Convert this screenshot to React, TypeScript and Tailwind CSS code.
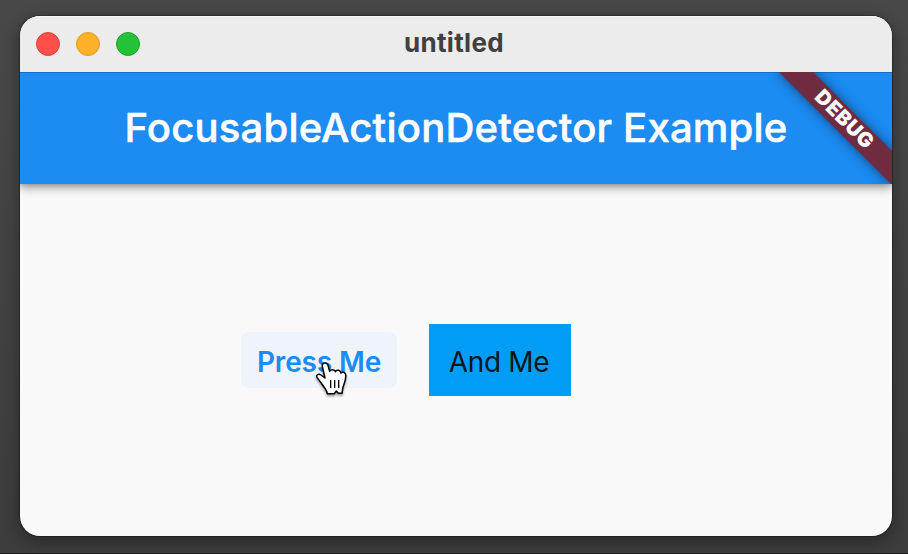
import React from "react";

function TrafficLights() {
  return (
    <div className="flex w-[120px] gap-4 pl-4">
      <span className="size-6 rounded-full border border-[#d9453f] bg-[#fe5049]" />
      <span className="size-6 rounded-full border border-[#dc9a26] bg-[#fdb129]" />
      <span className="size-6 rounded-full border border-[#1fa32f] bg-[#25c138]" />
    </div>
  );
}

function HandCursor() {
  return (
    <svg
      className="absolute left-[72px] top-[28px] drop-shadow-[0_2px_1px_rgba(0,0,0,0.35)]"
      width="40"
      height="40"
      viewBox="250 150 120 120"
      fill="none"
    >
      <path
        d="M278 169 C276 157 292 155 295 166 L300 184 C303 177 315 178 317 185 C321 178 332 180 334 189 C339 184 347 187 348 194 C350 210 343 222 340 231 L337 250 L326 250 L320 243 L314 251 L293 251 C291 240 283 230 276 221 L262 202 C258 194 267 190 274 195 L286 204 Z"
        fill="#fff"
        stroke="#000"
        strokeWidth="4.5"
        strokeLinejoin="round"
      />
      <path d="M303 210V234M315 210V234M327 210V234" stroke="#000" strokeWidth="4" />
    </svg>
  );
}

export default function App() {
  return (
    <div className="h-[554px] w-[908px] overflow-hidden border-b border-[#202020] bg-linear-to-b from-[#484848] to-[#3c3c3c] px-5 pr-4 pt-4 font-['Inter','Liberation_Sans',sans-serif]">
      <div className="flex h-[520px] w-[872px] flex-col overflow-hidden rounded-[20px] bg-[#f9f9f9] shadow-[0_4px_14px_2px_rgba(0,0,0,0.3),0_0_1px_1px_rgba(0,0,0,0.3)]">
        <header className="relative z-20 flex h-14 shrink-0 items-center border-t border-[#f8f8f8] bg-[#ececec] pb-px">
          <TrafficLights />
          <h1 className="flex-1 text-center text-[26px] font-bold leading-8 text-[#404040]">
            <span className="relative -left-[2px] -top-px tracking-[0.3px]">untitled</span>
          </h1>
          <div className="w-[120px]" />
        </header>
        <div className="relative z-10 flex h-28 shrink-0 items-center justify-center border-t border-[#166fc4] bg-[#1c8bf2] pb-px shadow-[0_4px_10px_rgba(0,0,0,0.3),0_2px_5px_rgba(0,0,0,0.2)]">
          <h2 className="whitespace-nowrap text-[40px] font-medium leading-none tracking-[0.22px] text-white [-webkit-text-stroke:0.5px_white]">
            FocusableActionDetector Example
          </h2>
          <div className="absolute -top-px right-0 h-28 w-28 overflow-visible [clip-path:inset(0_0_0_-40px)]">
            <div className="absolute left-[-16px] top-[36px] flex h-6 w-[160px] rotate-45 items-center justify-center bg-[#712b40] pb-px text-[20.4px] font-black leading-none tracking-[0.6px] text-white shadow-[0_0_12px_rgba(0,0,0,0.5)]">
              DEBUG
            </div>
          </div>
        </div>
        <main className="flex flex-1 items-center gap-8 pl-[221px]">
          <button className="relative h-14 w-[156px] rounded-lg bg-[#eff4fb] pt-1 text-[28px] font-semibold leading-none tracking-[-0.15px] text-[#1c8bf2]">
            <span className="whitespace-nowrap">Press Me</span>
            <HandCursor />
          </button>
          <div className="flex h-[72px] w-[142px] items-center justify-center bg-[#009cf5] pt-1 pr-[2px] text-[28px] leading-none tracking-[-0.3px] text-[#0a1620]">
            And Me
          </div>
        </main>
      </div>
    </div>
  );
}
